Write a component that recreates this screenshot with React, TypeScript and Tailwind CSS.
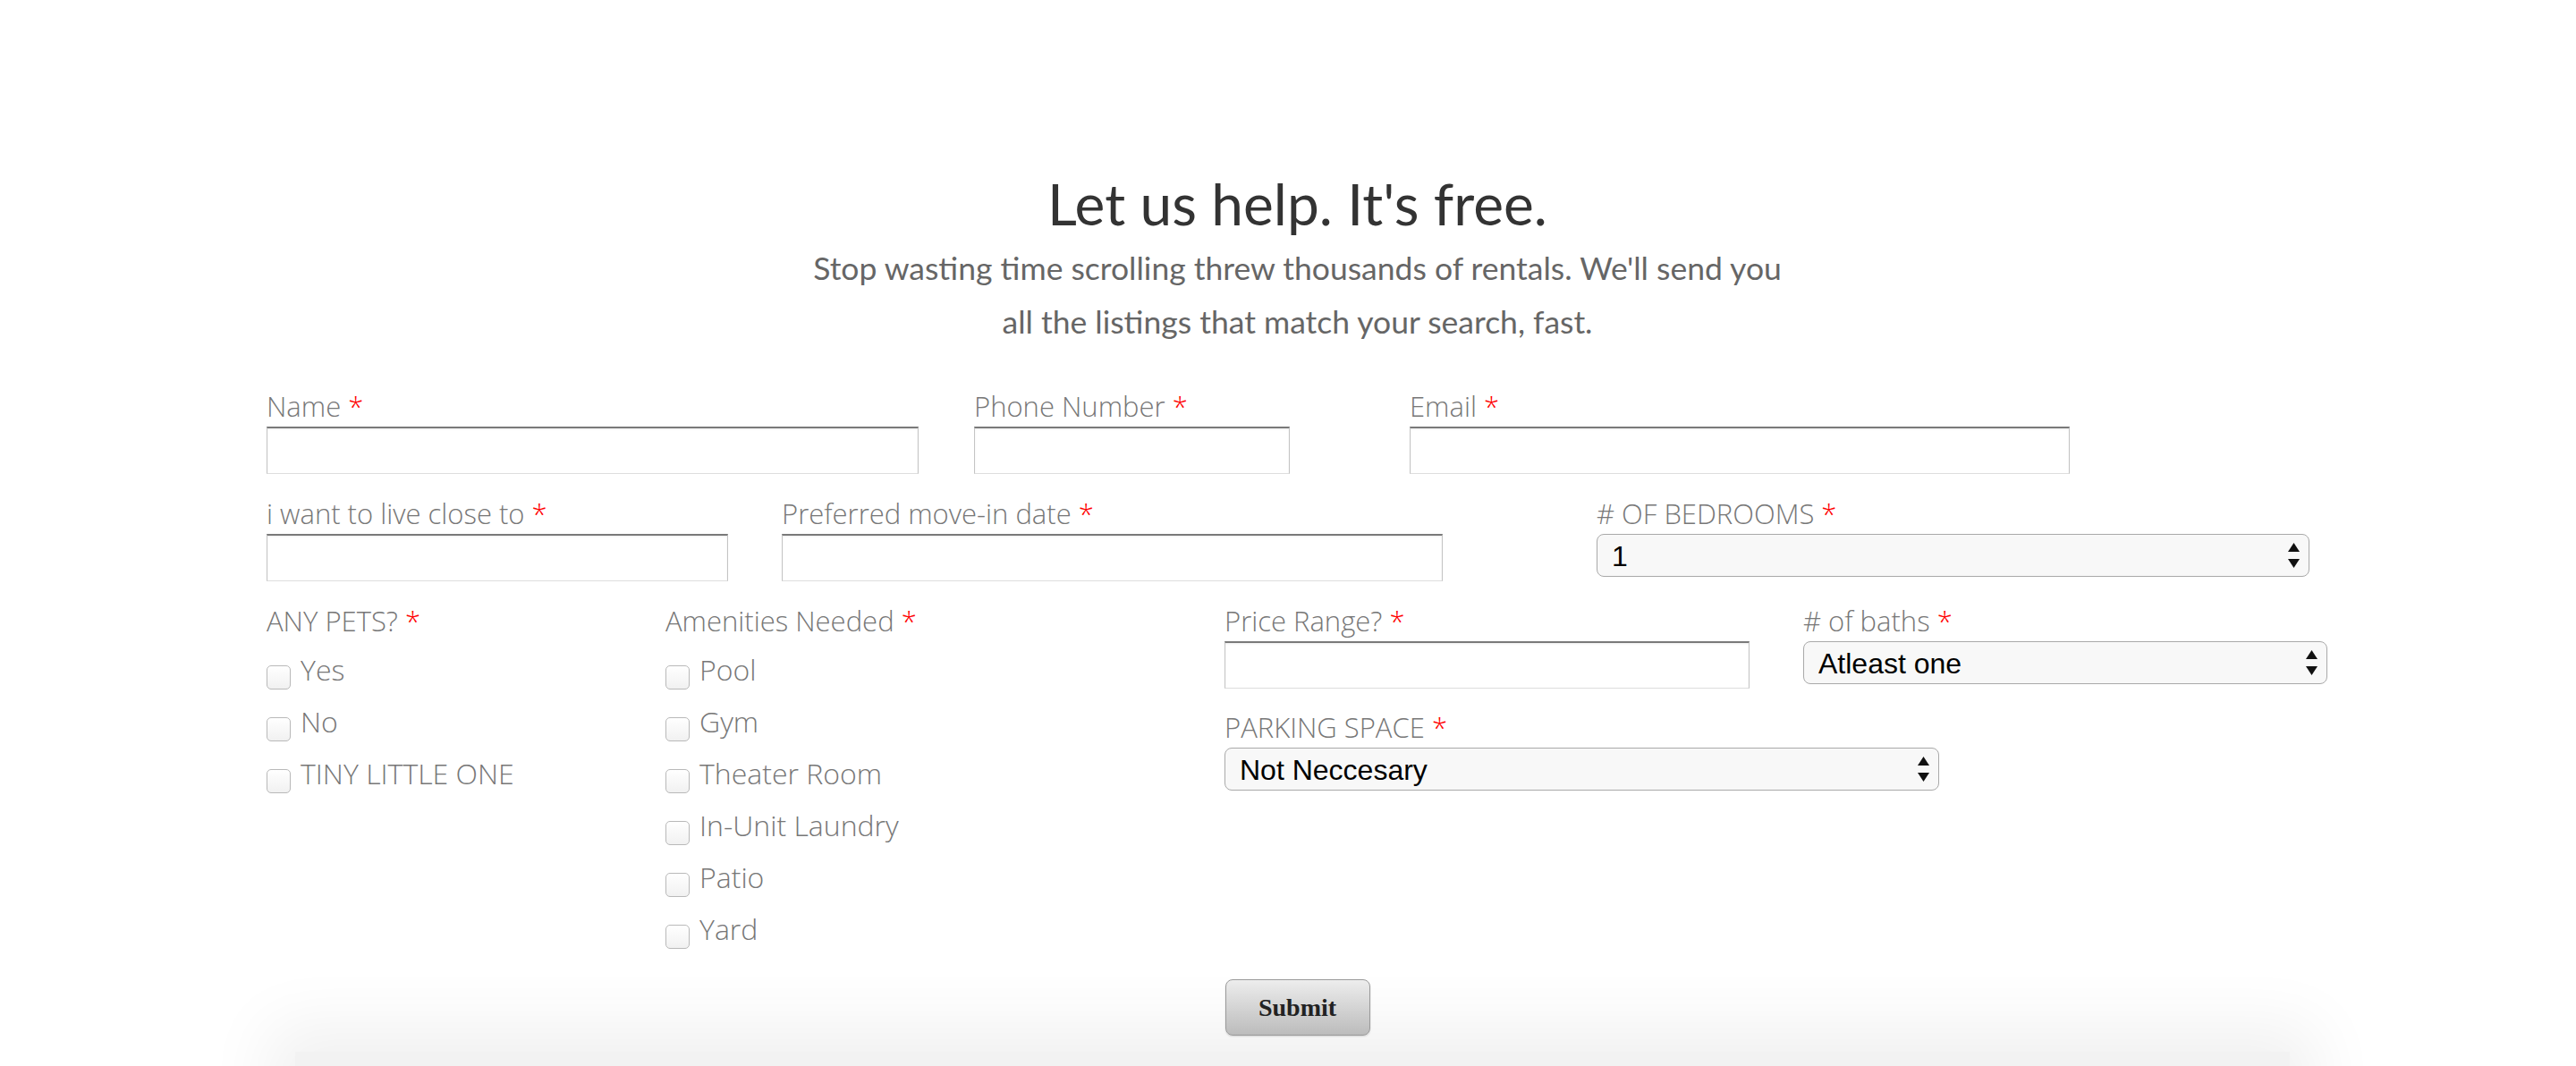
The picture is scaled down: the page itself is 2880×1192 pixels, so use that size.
import React from "react";

// shared styles
const labelCls = "block text-[31px] leading-[36px] font-light text-[#777] mb-[5px] whitespace-nowrap";
const inputCls =
  "block h-[53px] w-full bg-white border border-[#c4c4c4] border-t-2 border-t-[#7a7a7a] border-b-[#dedede] shadow-[inset_0_1px_2px_rgba(0,0,0,0.08)] outline-none";

function Req() {
  return <span className="text-[#f00]"> *</span>;
}

function TextField({ label, className }: { label: string; className: string }) {
  return (
    <div className={className}>
      <label className={labelCls}>
        {label}
        <Req />
      </label>
      <input type="text" className={inputCls} />
    </div>
  );
}

function Arrows() {
  return (
    <svg width="13" height="28" viewBox="0 0 13 28" className="pointer-events-none absolute right-[11px] top-1/2 -translate-y-1/2">
      <path d="M6.5 0 L13 10 L0 10 Z" fill="#111" />
      <path d="M0 18 L13 18 L6.5 28 Z" fill="#111" />
    </svg>
  );
}

function SelectField({ label, value, options, className }: { label: string; value: string; options: string[]; className: string }) {
  return (
    <div className={className}>
      <label className={labelCls}>
        {label}
        <Req />
      </label>
      <div className="relative">
        <select
          defaultValue={value}
          className="block h-[48px] w-full appearance-none rounded-[8px] border border-[#a9a9a9] bg-[#f8f8f8] pl-[16px] text-[32px] text-black font-['Liberation_Sans',Arial,sans-serif] outline-none"
        >
          {options.map((o) => (
            <option key={o}>{o}</option>
          ))}
        </select>
        <Arrows />
      </div>
    </div>
  );
}

function CheckList({ label, items, className }: { label: string; items: string[]; className: string }) {
  return (
    <div className={className}>
      <label className={labelCls}>
        {label}
        <Req />
      </label>
      <ul className="mt-[8px]">
        {items.map((it) => (
          <li key={it} className="flex h-[58px] items-start">
            <input
              type="checkbox"
              className="mt-[24px] h-[27px] w-[27px] shrink-0 appearance-none rounded-[5px] border border-[#b9b9b9] bg-gradient-to-b from-white to-[#f1f1f1]"
            />
            <span className="ml-[11px] text-[32px] leading-[58px] font-light text-[#777] whitespace-nowrap">{it}</span>
          </li>
        ))}
      </ul>
    </div>
  );
}

export default function App() {
  return (
    <div className="min-h-[1192px] w-full overflow-hidden bg-white font-['Open_Sans',sans-serif] pt-[188px]">
      <div className="ml-[298px] w-[2305px]">
        {/* header */}
        <h1 className="text-center font-['Lato',sans-serif] text-[64px] leading-[79px] text-[#333]">Let us help. It's free.</h1>
        <p className="mt-[3px] text-center font-['Lato',sans-serif] text-[35.5px] leading-[60px] text-[#666]">
          Stop wasting time scrolling threw thousands of rentals. We'll send you
          <br />
          all the listings that match your search, fast.
        </p>

        {/* form */}
        <form className="mt-[46px]" onSubmit={(e) => e.preventDefault()}>
          <div className="flex items-start">
            <TextField label="Name" className="w-[729px]" />
            <TextField label="Phone Number" className="ml-[62px] w-[353px]" />
            <TextField label="Email" className="ml-[134px] w-[738px]" />
          </div>

          <div className="mt-[26px] flex items-start">
            <TextField label="i want to live close to" className="w-[516px]" />
            <TextField label="Preferred move-in date" className="ml-[60px] w-[739px]" />
            <SelectField label="# OF BEDROOMS" value="1" options={["1", "2", "3", "4+"]} className="ml-[172px] w-[797px]" />
          </div>

          <div className="mt-[26px] flex items-start">
            <CheckList label="ANY PETS?" items={["Yes", "No", "TINY LITTLE ONE"]} className="w-[446px]" />
            <CheckList
              label="Amenities Needed"
              items={["Pool", "Gym", "Theater Room", "In-Unit Laundry", "Patio", "Yard"]}
              className="w-[625px]"
            />
            <div className="flex flex-col">
              <div className="flex items-start">
                <TextField label="Price Range?" className="w-[587px]" />
                <SelectField label="# of baths" value="Atleast one" options={["Atleast one", "Two", "Three+"]} className="ml-[60px] w-[586px]" />
              </div>
              <SelectField
                label="PARKING SPACE"
                value="Not Neccesary"
                options={["Not Neccesary", "One spot", "Two spots"]}
                className="mt-[25px] w-[799px]"
              />
            </div>
          </div>

          <div className="mt-[27px] flex justify-center">
            <button
              type="submit"
              className="h-[63px] w-[162px] rounded-[8px] border border-[#9a9a9a] bg-gradient-to-b from-[#ededed] to-[#bcbcbc] font-['Liberation_Serif',serif] text-[28px] font-bold text-[#222] shadow-[0_1px_2px_rgba(0,0,0,0.15)]"
            >
              Submit
            </button>
          </div>
        </form>
      </div>

      {/* card below */}
      <div className="ml-[330px] mt-[18px] h-[200px] w-[2230px] bg-[#f2f2f2] shadow-[0_0_70px_30px_rgba(0,0,0,0.06)]" />
    </div>
  );
}
